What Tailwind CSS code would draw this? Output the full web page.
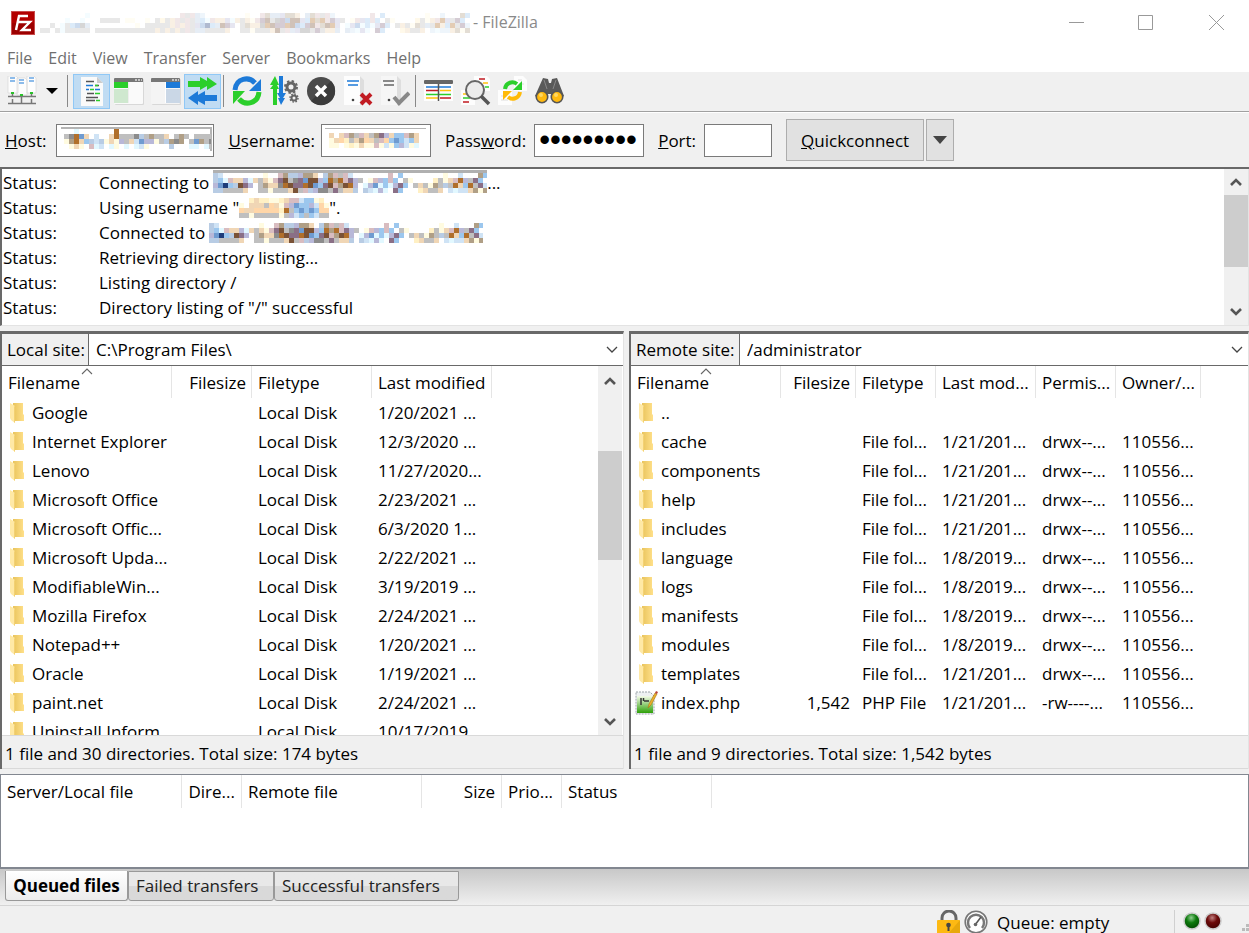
<!DOCTYPE html>
<html lang="en">
<head>
    <meta charset="UTF-8">
    <title>FileZilla</title>
    <script src="https://cdn.jsdelivr.net/npm/@tailwindcss/browser@4"></script>
</head>
<body class="h-screen flex flex-col overflow-hidden bg-[#f0f0f0] text-black text-[17px] leading-[25px] font-['Open_Sans','Noto_Sans',sans-serif] whitespace-nowrap">

    <!-- Shared icons -->
    <svg class="absolute w-0 h-0" aria-hidden="true">
        <defs>
            <linearGradient id="folderGrad" x1="0" x2="1"><stop offset="0" stop-color="#e9c45c"/><stop offset="1" stop-color="#ffe08a"/></linearGradient>
            <linearGradient id="phpGrad" x1="0" y1="0" x2="0" y2="1"><stop offset="0" stop-color="#f4fbe8"/><stop offset="1" stop-color="#2ea008"/></linearGradient>
            <radialGradient id="ledGreen" cx=".45" cy=".3" r=".7"><stop offset="0" stop-color="#8fce8f"/><stop offset=".45" stop-color="#0d7a0d"/><stop offset="1" stop-color="#024a02"/></radialGradient>
            <radialGradient id="ledRed" cx=".45" cy=".3" r=".7"><stop offset="0" stop-color="#c08080"/><stop offset=".45" stop-color="#6d0a0a"/><stop offset="1" stop-color="#430202"/></radialGradient>
            <symbol id="folder" viewBox="0 0 16 22">
                <path d="M3 1h10v11l1 1v6H3z" fill="url(#folderGrad)"/>
                <path d="M0 1l5 3v17l-4-3-1-2z" fill="#ffe9a6"/>
                <path d="M4 4l1 .6V21l-1-1z" fill="#f3d173"/>
            </symbol>
            <symbol id="php" viewBox="0 0 23 25">
                <path d="M1 2h14l4 4v18H1z" fill="#eef1f2" stroke="#9aa3a8" stroke-dasharray="2 1"/>
                <path d="M2 6h16v17H2z" fill="url(#phpGrad)"/>
                <path d="M6 8v7M8.500 8v3M9 11h5" stroke="#333" stroke-width="1.500" fill="none"/>
                <path d="M13 18l1-4 6-11 2 1-6 11z" fill="#e9b12c" stroke="#a9731a" stroke-width=".6"/>
                <path d="M20 3l1-2 2 1-1 2z" fill="#b7433a"/>
            </symbol>
            <symbol id="up" viewBox="0 0 12 10"><path d="M1 8l5-5 5 5" fill="none" stroke="#555" stroke-width="2.6"/></symbol>
            <symbol id="down" viewBox="0 0 12 10"><path d="M1 2l5 5 5-5" fill="none" stroke="#555" stroke-width="2.6"/></symbol>
            <symbol id="chevron" viewBox="0 0 12 8"><path d="M1 1l5 5 5-5" fill="none" stroke="#444" stroke-width="1.3"/></symbol>
            <symbol id="sort" viewBox="0 0 12 7"><path d="M1 6l5-5 5 5" fill="none" stroke="#666" stroke-width="1.1"/></symbol>
        </defs>
    </svg>

    <!-- Title bar -->
    <header class="bg-white">
        <div class="h-[45px] flex items-center pl-[11px] text-[#8a8a8a]">
            <svg class="w-6 h-6 shrink-0" viewBox="0 0 24 24">
                <rect width="24" height="24" fill="#b30000"/>
                <rect x=".5" y=".5" width="23" height="23" fill="none" stroke="#fff" stroke-dasharray="1 1" opacity=".6"/>
                <path d="M1 23V12h22v11z" fill="#8c0000" opacity=".6"/>
                <path d="M5 19L8 5h9M7 11h5M11 11h8l-8 8h9" fill="none" stroke="#fff" stroke-width="2.4"/>
            </svg>
            <svg class="ml-[5px] w-[430px] h-5 opacity-35" data-mosaic="title"></svg>
            <span class="ml-[3px] text-[16px]">- FileZilla</span>
            <div class="ml-auto flex items-center pr-[25px]">
                <button type="button" aria-label="Minimize" class="w-[70px] h-6 flex justify-end"><svg class="w-[15px] h-6" viewBox="0 0 15 24"><path d="M0 11.5h15" stroke="#999"/></svg></button>
                <button type="button" aria-label="Maximize" class="w-[69px] h-6 flex justify-end"><svg class="w-[15px] h-6" viewBox="0 0 15 24"><path d="M.5 4.500h14v14H.5z" fill="none" stroke="#999"/></svg></button>
                <button type="button" aria-label="Close" class="w-[71px] h-6 flex justify-end"><svg class="w-[15px] h-6" viewBox="0 0 15 24"><path d="M0 4l15 15M15 4L0 19" stroke="#999"/></svg></button>
            </div>
        </div>
        <nav class="h-[27px] flex items-center gap-4 pl-[7px] text-[16px] text-[#6f6f6f]">
            <a href="#">File</a>
            <a href="#">Edit</a>
            <a href="#">View</a>
            <a href="#">Transfer</a>
            <a href="#">Server</a>
            <a href="#">Bookmarks</a>
            <a href="#">Help</a>
        </nav>
    </header>

    <!-- Toolbar -->
    <div class="h-10 shrink-0 flex items-center pl-[3px] pb-px border-b border-[#a0a0a0]">
        <button type="button" aria-label="Site Manager" class="w-[37px] h-[35px] flex items-center justify-center">
            <svg class="w-[30px] h-[30px]" viewBox="0 0 30 30">
                <path d="M1 0h8l2 2v15H1zM10 2h8l2 2v15H10zM20 0h7l2 2v15h-9z" fill="#fdfdfd" stroke="#d5d5d5" stroke-width=".6"/>
                <path d="M3 2h5M3 5h5M12 4h5M12 7h5M22 2h5M22 5h5" stroke="#1d7ad8" stroke-width="1.200"/>
                <path d="M5.500 16v5M14.500 18v4M24.500 16v5M1 20.500h28M1 27.500h28M5.500 23v5M14.500 22v6M24.500 23v5" stroke="#777" stroke-width="1.500"/>
                <path d="M4 16h3v2H4zM13 18h3v2h-3zM23 16h3v2h-3z" fill="#2bbf2b"/>
            </svg>
        </button>
        <button type="button" aria-label="Open site list" class="w-6 h-[35px] flex items-center justify-center">
            <svg class="w-3 h-[6px]" viewBox="0 0 12 6"><path d="M0 0h12L6 6z"/></svg>
        </button>
        <span class="w-px h-8 ml-[3px] mr-[5px] bg-[#888]"></span>
        <button type="button" aria-label="Toggle message log" class="w-[37px] h-[35px] flex items-center justify-center bg-[#c0dcf3] border border-[#90c8f6]">
            <svg class="w-[30px] h-[30px]" viewBox="0 0 30 30">
                <path d="M4 1h16l6 6v23H4z" fill="#fafafa"/><path d="M20 1v6h6z" fill="#ccc"/>
                <path d="M9 5.500h8M18 9.500h4M10 17.500h7M9 21.500h12" stroke="#555" stroke-width="1.600"/>
                <path d="M9 9.500h7M9 13.500h3M18 13.500h5" stroke="#1d7ad8" stroke-width="1.600"/>
                <path d="M13 13.500h4M18 9.500h3M18 17.500h5M19 24.500h4" stroke="#2bcf2b" stroke-width="1.600"/>
                <path d="M9 24.500h9" stroke="#555" stroke-width="1.600"/>
            </svg>
        </button>
        <button type="button" aria-label="Toggle local tree" class="w-[37px] h-[35px] flex items-center justify-center">
            <svg class="w-[30px] h-[30px]" viewBox="0 0 30 30">
                <rect x="1" y="3" width="29" height="26" rx="1" fill="#d8d8d8"/><rect y="2" width="29" height="26" rx="1" fill="#fafafa"/>
                <path d="M0 6V3q0-1 1-1h27q1 0 1 1v3z" fill="#777"/><path d="M21 4h2M24 4h2M27 4h1" stroke="#ddd" stroke-width="1.500"/>
                <path d="M0 6h14v6H0z" fill="#2bcf2b"/><path d="M0 13h14v14H0z" fill="#cfe8cf"/><path d="M14.500 6v21" stroke="#eee"/>
            </svg>
        </button>
        <button type="button" aria-label="Toggle remote tree" class="w-[37px] h-[35px] flex items-center justify-center">
            <svg class="w-[30px] h-[30px]" viewBox="0 0 30 30">
                <rect x="1" y="3" width="29" height="26" rx="1" fill="#d8d8d8"/><rect y="2" width="29" height="26" rx="1" fill="#f4f4f4"/>
                <path d="M0 6V3q0-1 1-1h27q1 0 1 1v3z" fill="#777"/><path d="M21 4h2M24 4h2M27 4h1" stroke="#ddd" stroke-width="1.500"/>
                <path d="M15 6h14v6H15z" fill="#1d7ad8"/><path d="M15 13h14v14H15z" fill="#cad7e6"/><path d="M14.500 6v21" stroke="#fff"/>
            </svg>
        </button>
        <button type="button" aria-label="Toggle transfer queue" class="w-[37px] h-[35px] flex items-center justify-center bg-[#c0dcf3] border border-[#90c8f6]">
            <svg class="w-[30px] h-[30px]" viewBox="0 0 30 30">
                <path d="M0 5h12V1l7 4V1l10 7-10 6v-4l-7 4v-3H0z" fill="#2bcf2b"/>
                <path d="M29 19H17v-4l-7 4v-4L0 22l10 7v-4l7 4v-4h12z" fill="#1d7ad8"/>
            </svg>
        </button>
        <span class="w-px h-8 ml-[2px] mr-1 bg-[#888]"></span>
        <button type="button" aria-label="Refresh" class="w-[37px] h-[35px] flex items-center justify-center">
            <svg class="w-[30px] h-[30px]" viewBox="0 0 30 30">
                <path d="M3 14C4 2 17 0 23 7" fill="none" stroke="#1d7ad8" stroke-width="5"/><path d="M29 3v12H17z" fill="#1d7ad8"/>
                <path d="M27 16c-1 12-14 14-20 7" fill="none" stroke="#2bcf2b" stroke-width="5"/><path d="M1 28V15h12z" fill="#2bcf2b"/>
            </svg>
        </button>
        <button type="button" aria-label="Process queue" class="w-[37px] h-[35px] flex items-center justify-center">
            <svg class="w-[30px] h-[30px]" viewBox="0 0 30 30">
                <path d="M4 29V13H1l3-4H1l5-9 4 9H8l2 4H8v16z" fill="#2bcf2b"/>
                <path d="M10 0v17H8l3 5H9l3 7 4-7h-2l3-5h-3V0z" fill="#1d7ad8"/>
                <circle cx="22" cy="11" r="4" fill="none" stroke="#666" stroke-width="3"/><circle cx="22" cy="11" r="6" fill="none" stroke="#666" stroke-width="2" stroke-dasharray="2.400 2.300"/>
                <circle cx="25" cy="22" r="2.500" fill="none" stroke="#666" stroke-width="2"/><circle cx="25" cy="22" r="4" fill="none" stroke="#666" stroke-width="1.500" stroke-dasharray="1.600 1.500"/>
            </svg>
        </button>
        <button type="button" aria-label="Cancel" class="w-[37px] h-[35px] flex items-center justify-center">
            <svg class="w-[30px] h-[30px]" viewBox="0 0 30 30">
                <circle cx="15" cy="15" r="14" fill="#4c4c4c"/><path d="M5 25A14 14 0 0 0 25 5z" fill="#3b3b3b"/>
                <path d="M10 10l10 10M20 10L10 20" stroke="#fff" stroke-width="3.500"/>
            </svg>
        </button>
        <button type="button" aria-label="Disconnect" class="w-[37px] h-[35px] flex items-center justify-center">
            <svg class="w-[30px] h-[30px]" viewBox="0 0 30 30">
                <path d="M1 0h16l4 4v25H1z" fill="#fdfdfd"/><path d="M17 0l4 4v25h-4z" fill="#dedede"/>
                <path d="M4 5h12M5 9h10" stroke="#1d7ad8" stroke-width="1.600"/><circle cx="10" cy="24" r="1.300" fill="#444"/>
                <path d="M18 18l10 10M28 18L18 28" stroke="#c11b22" stroke-width="4"/>
            </svg>
        </button>
        <button type="button" aria-label="Reconnect" class="w-[37px] h-[35px] flex items-center justify-center">
            <svg class="w-[30px] h-[30px]" viewBox="0 0 30 30">
                <path d="M1 0h16l4 4v25H1z" fill="#f6f6f6"/><path d="M17 0l4 4v25h-4z" fill="#dedede"/>
                <path d="M3 5h11M4 9h10" stroke="#666" stroke-width="1.600"/><circle cx="9" cy="24" r="1.300" fill="#444"/>
                <path d="M14 21l5 6 10-10" fill="none" stroke="#888" stroke-width="4"/>
            </svg>
        </button>
        <span class="w-px h-8 ml-[2px] mr-1 bg-[#888]"></span>
        <button type="button" aria-label="Filter" class="w-[37px] h-[35px] flex items-center justify-center">
            <svg class="w-[30px] h-[30px]" viewBox="0 0 30 30">
                <rect y="4" width="29" height="21" fill="#fdfdfd"/><rect y="4" width="29" height="4" rx="1" fill="#666"/>
                <path d="M2 11h25" stroke="#1d7ad8" stroke-width="1.500"/><path d="M2 14.500h12M16 22h11" stroke="#c11b22" stroke-width="1.500"/>
                <path d="M16 14.500h11M2 22h12" stroke="#ffc20e" stroke-width="1.500"/><path d="M2 18.500h25" stroke="#2bcf2b" stroke-width="1.500"/>
                <path d="M14.500 8v17" stroke="#555" stroke-width="1.500"/>
            </svg>
        </button>
        <button type="button" aria-label="Directory comparison" class="w-[37px] h-[35px] flex items-center justify-center">
            <svg class="w-[30px] h-[30px]" viewBox="0 0 30 30">
                <path d="M13 0h13l3 3v12H13zM0 14h14v15H0z" fill="#fdfdfd"/>
                <path d="M18 3h6M2 26h6" stroke="#c11b22" stroke-width="1.600"/><path d="M22 7h5M2 18h4" stroke="#ffc20e" stroke-width="1.600"/><path d="M24 11h4M2 22h7" stroke="#2bcf2b" stroke-width="1.600"/>
                <circle cx="14" cy="14" r="9" fill="#ececec" stroke="#666" stroke-width="2"/><path d="M20 20l8 8" stroke="#555" stroke-width="3.500"/>
            </svg>
        </button>
        <button type="button" aria-label="Synchronized browsing" class="w-[37px] h-[35px] flex items-center justify-center">
            <svg class="w-[30px] h-[30px]" viewBox="0 0 30 30">
                <path d="M16 0h9l4 4v11H16zM0 14h14v15H0z" fill="#fdfdfd"/>
                <path d="M20 4h4M21 8h5M3 20h4M3 24h7" stroke="#ddd"/>
                <path d="M7 13C8 6 15 5 19 8" fill="none" stroke="#2bcf2b" stroke-width="4"/><path d="M24 5v9h-9z" fill="#2bcf2b"/>
                <path d="M22 16c-1 7-8 8-12 5" fill="none" stroke="#ffba08" stroke-width="4"/><path d="M5 24v-9h9z" fill="#ffba08"/>
            </svg>
        </button>
        <button type="button" aria-label="Find files" class="w-[37px] h-[35px] flex items-center justify-center">
            <svg class="w-[30px] h-[30px]" viewBox="0 0 30 30">
                <path d="M8 2l5 1 1 4h2l1-4 5-1 7 18-6 4h-5l-2-6h-3l-2 6H6l-6-4z" fill="#5a5a5a"/>
                <path d="M9 4l3 9M21 4l-3 9" stroke="#888"/>
                <circle cx="7" cy="21" r="5.700" fill="#ffb90f" stroke="#555" stroke-width="1.600"/><circle cx="22" cy="21" r="5.700" fill="#ffb90f" stroke="#555" stroke-width="1.600"/>
                <circle cx="6" cy="19" r="2" fill="#ffd864"/><circle cx="21" cy="19" r="2" fill="#ffd864"/>
            </svg>
        </button>
    </div>

    <!-- Quickconnect bar -->
    <form id="quickconnect" class="h-[55px] shrink-0 flex items-center pl-[5px] border-t border-white">
        <label for="host"><u>H</u>ost:</label>
        <div class="relative ml-[10px]">
            <input type="text" id="host" class="block w-[158px] h-[33px] bg-white border border-[#7a7a7a]">
            <span class="absolute left-[5px] top-[3px] w-[151px] h-6 border-t-2 border-r-2 border-[#b4b4b4]"></span>
            <svg class="absolute left-2 top-[5px] w-[147px] h-5" data-mosaic="host"></svg>
        </div>
        <label for="username" class="ml-[14px]"><u>U</u>sername:</label>
        <div class="relative ml-[6px]">
            <input type="text" id="username" class="block w-[110px] h-[33px] bg-white border border-[#7a7a7a]">
            <span class="absolute left-1 top-1 w-[101px] h-px bg-[#b4b4b4]"></span>
            <svg class="absolute left-2 top-[9px] w-[90px] h-[15px]" data-mosaic="user"></svg>
        </div>
        <label for="password" class="ml-[14px]">Pass<u>w</u>ord:</label>
        <input type="password" id="password" value="passwords" class="ml-2 w-[110px] h-[33px] px-1 bg-white border border-[#7a7a7a] text-[31px] font-['Liberation_Sans',sans-serif]">
        <label for="port" class="ml-[14px]"><u>P</u>ort:</label>
        <input type="text" id="port" class="ml-2 w-[68px] h-[33px] px-2 bg-white border border-[#7a7a7a]">
        <button type="submit" class="ml-[14px] w-[138px] h-[42px] bg-[#e1e1e1] border border-[#adadad]"><u>Q</u>uickconnect</button>
        <button type="button" aria-label="Quickconnect history" class="ml-[2px] w-7 h-[42px] flex items-center justify-center bg-[#e1e1e1] border border-[#adadad]">
            <svg class="w-[14px] h-2" viewBox="0 0 14 8"><path d="M0 0h14L7 8z" fill="#444"/></svg>
        </button>
    </form>

    <!-- Message log -->
    <section class="h-[159px] shrink-0 flex bg-white border-t-2 border-l-2 border-[#696969] border-b border-b-[#e3e3e3]">
        <div class="flex-1 pt-px pl-px">
            <div class="flex"><span class="w-24">Status:</span><span>Connecting to</span><svg class="ml-1 w-[274px] h-[23px] border-t-[3px] border-[#b0b0b0]" data-mosaic="server"></svg><span>...</span></div>
            <div class="flex"><span class="w-24">Status:</span><span>Using username "</span><svg class="mt-[3px] w-[90px] h-5" data-mosaic="name"></svg><span>".</span></div>
            <div class="flex"><span class="w-24">Status:</span><span>Connected to</span><svg class="ml-1 mt-[3px] w-[274px] h-5" data-mosaic="server"></svg></div>
            <div class="flex"><span class="w-24">Status:</span><span>Retrieving directory listing...</span></div>
            <div class="flex"><span class="w-24">Status:</span><span>Listing directory /</span></div>
            <div class="flex"><span class="w-24">Status:</span><span>Directory listing of "/" successful</span></div>
        </div>
        <div class="w-[25px] flex flex-col items-center bg-[#f0f0f0] border-r border-[#e3e3e3]">
            <svg class="w-3 h-[10px] my-2"><use href="#up"/></svg>
            <div class="w-full h-[72px] bg-[#cdcdcd]"></div>
            <svg class="w-3 h-[10px] mt-auto mb-2"><use href="#down"/></svg>
        </div>
    </section>

    <!-- Local and remote file lists -->
    <main class="flex-1 min-h-0 mt-[5px] grid grid-cols-[624fr_620fr] gap-[5px]">
        <section class="min-w-0 min-h-0 flex flex-col bg-white border-t-[3px] border-l-2 border-[#696969] border-r border-r-[#e3e3e3]">
            <div class="h-8 shrink-0 flex border-b border-[#696969]">
                <label for="localSite" class="w-[87px] pl-[5px] pt-[3px] bg-[#f0f0f0] border-r border-[#696969]">Local site:</label>
                <div class="relative flex-1">
                    <select id="localSite" class="w-full h-full pl-[7px] pb-px appearance-none"><option>C:\Program Files\</option></select>
                    <svg class="absolute right-[5px] top-3 w-3 h-2 pointer-events-none"><use href="#chevron"/></svg>
                </div>
            </div>
            <div class="flex-1 min-h-0 flex">
                <div class="flex-1 overflow-hidden">
                    <table class="table-fixed border-separate border-spacing-0 w-[490px]">
                        <colgroup><col class="w-[170px]"><col class="w-20"><col class="w-[120px]"><col class="w-[120px]"></colgroup>
                        <thead>
                            <tr class="h-8">
                                <th class="relative px-[6px] py-0 font-normal text-left border-r border-[#e5e5e5]">Filename<svg class="absolute left-[79px] top-[2px] w-3 h-[7px]"><use href="#sort"/></svg></th>
                                <th class="px-[5px] py-0 font-normal text-right border-r border-[#e5e5e5]">Filesize</th>
                                <th class="px-[6px] py-0 font-normal text-left border-r border-[#e5e5e5]">Filetype</th>
                                <th class="px-[6px] py-0 font-normal text-left border-r border-[#e5e5e5]">Last modified</th>
                            </tr>
                        </thead>
                        <tbody id="localFiles"></tbody>
                    </table>
                </div>
                <div class="w-6 mr-px flex flex-col items-center bg-[#f0f0f0]">
                    <svg class="w-3 h-[10px] mt-[10px] mb-[65px]"><use href="#up"/></svg>
                    <div class="w-full h-[109px] bg-[#cdcdcd]"></div>
                    <svg class="w-3 h-[10px] mt-auto mb-2"><use href="#down"/></svg>
                </div>
            </div>
            <div class="h-[34px] shrink-0 pl-[3px] pt-[5px] bg-[#f0f0f0] border-y border-[#d9d9d9]">1 file and 30 directories. Total size: 174 bytes</div>
        </section>

        <section class="min-w-0 min-h-0 flex flex-col bg-white border-t-[3px] border-l-2 border-[#696969] border-r border-r-[#e3e3e3]">
            <div class="h-8 shrink-0 flex border-b border-[#696969]">
                <label for="remoteSite" class="w-[109px] pl-[5px] pt-[3px] bg-[#f0f0f0] border-r border-[#696969]">Remote site:</label>
                <div class="relative flex-1">
                    <select id="remoteSite" class="w-full h-full pl-[7px] pb-px appearance-none"><option>/administrator</option></select>
                    <svg class="absolute right-[5px] top-3 w-3 h-2 pointer-events-none"><use href="#chevron"/></svg>
                </div>
            </div>
            <div class="flex-1 min-h-0 overflow-hidden">
                <table class="table-fixed border-separate border-spacing-0 w-[570px]">
                    <colgroup><col class="w-[150px]"><col class="w-[75px]"><col class="w-20"><col class="w-[100px]"><col class="w-20"><col class="w-[85px]"></colgroup>
                    <thead>
                        <tr class="h-8">
                            <th class="relative px-[6px] py-0 font-normal text-left border-r border-[#e5e5e5]">Filename<svg class="absolute left-[69px] top-[2px] w-3 h-[7px]"><use href="#sort"/></svg></th>
                            <th class="px-[5px] py-0 font-normal text-right border-r border-[#e5e5e5]">Filesize</th>
                            <th class="px-[6px] py-0 font-normal text-left border-r border-[#e5e5e5]">Filetype</th>
                            <th class="px-[6px] py-0 font-normal text-left border-r border-[#e5e5e5]">Last mod...</th>
                            <th class="px-[6px] py-0 font-normal text-left border-r border-[#e5e5e5]">Permis...</th>
                            <th class="px-[6px] py-0 font-normal text-left border-r border-[#e5e5e5]">Owner/...</th>
                        </tr>
                    </thead>
                    <tbody id="remoteFiles"></tbody>
                </table>
            </div>
            <div class="h-[34px] shrink-0 pl-[3px] pt-[5px] bg-[#f0f0f0] border-y border-[#d9d9d9]">1 file and 9 directories. Total size: 1,542 bytes</div>
        </section>
    </main>

    <!-- Transfer queue -->
    <section class="h-[95px] shrink-0 mt-[5px] bg-white border border-[#828790] border-b-2">
        <table class="table-fixed border-separate border-spacing-0 w-[711px]">
            <colgroup><col class="w-[181px]"><col class="w-[60px]"><col class="w-[180px]"><col class="w-20"><col class="w-[60px]"><col class="w-[150px]"></colgroup>
            <thead>
                <tr class="h-[33px] [&>th]:font-normal [&>th]:px-[6px] [&>th]:py-0 [&>th]:border-r [&>th]:border-[#e5e5e5]">
                    <th class="text-left">Server/Local file</th>
                    <th class="text-right">Dire...</th>
                    <th class="text-left">Remote file</th>
                    <th class="text-right">Size</th>
                    <th class="text-left">Prio...</th>
                    <th class="text-left">Status</th>
                </tr>
            </thead>
        </table>
    </section>

    <!-- Queue tabs -->
    <div class="h-[37px] shrink-0 flex pl-[5px] pb-1 pt-[2px] bg-linear-to-b from-[#c8c8c8] to-[#f0f0f0] border-b border-[#d5d5d5]">
        <button type="button" class="w-[123px] font-bold bg-linear-to-b from-white to-[#ececec] border border-t-0 border-[#999] rounded-b-[3px]">Queued files</button>
        <button type="button" class="w-[146px] pl-[7px] pb-[2px] text-left text-[#222] bg-linear-to-b from-[#e8e8e8] from-50% to-[#d9d9d9] to-50% border border-[#999] rounded-b-[3px]">Failed transfers</button>
        <button type="button" class="w-[185px] pl-[7px] pb-[2px] text-left text-[#222] bg-linear-to-b from-[#e8e8e8] from-50% to-[#d9d9d9] to-50% border border-[#999] rounded-b-[3px]">Successful transfers</button>
    </div>

    <!-- Status bar -->
    <footer class="h-[27px] shrink-0 flex justify-end items-start pt-1 overflow-hidden">
        <svg class="w-6 h-6 shrink-0" viewBox="0 0 24 24">
            <path d="M5 11V8a7 7 0 0 1 14 0v3" fill="none" stroke="#666" stroke-width="3"/>
            <rect y="10" width="23" height="14" rx="1" fill="#fdb913"/><path d="M23 10v14H11z" fill="#e8a80c"/>
            <circle cx="11.500" cy="15" r="2.300" fill="#444"/><path d="M10.500 15h2v6h-2z" fill="#444"/>
        </svg>
        <svg class="ml-[3px] w-6 h-6 shrink-0" viewBox="0 0 24 24">
            <circle cx="12" cy="12" r="10.800" fill="#fff" stroke="#777" stroke-width="1.600"/>
            <path d="M6 18a8 8 0 1 1 12 0" fill="none" stroke="#777" stroke-width="2.500"/>
            <path d="M11 15l6-8" stroke="#555" stroke-width="1.600"/><circle cx="11.500" cy="14.500" r="1.800" fill="#666"/>
        </svg>
        <span class="ml-[9px] w-[177px]">Queue: empty</span>
        <span class="w-px h-full bg-[#d0d0d0]"></span>
        <svg class="ml-2 mt-[2px] w-[18px] h-[18px]" viewBox="0 0 18 18"><circle cx="9" cy="9" r="8" fill="url(#ledGreen)" stroke="#ccc" stroke-width="1.500"/></svg>
        <svg class="ml-[3px] mt-[2px] w-[18px] h-[18px]" viewBox="0 0 18 18"><circle cx="9" cy="9" r="8" fill="url(#ledRed)" stroke="#ccc" stroke-width="1.500"/></svg>
        <svg class="ml-5 mt-[13px] w-[7px] h-[10px]" viewBox="0 0 7 10"><path d="M0 5h3v3H0zM4 5h3v3H4zM4 1h3v3H4z" fill="#bbb"/></svg>
    </footer>

    <script>
        const localFiles = [
            ['Google', '', 'Local Disk', '1/20/2021 ...'],
            ['Internet Explorer', '', 'Local Disk', '12/3/2020 ...'],
            ['Lenovo', '', 'Local Disk', '11/27/2020...'],
            ['Microsoft Office', '', 'Local Disk', '2/23/2021 ...'],
            ['Microsoft Offic...', '', 'Local Disk', '6/3/2020 1...'],
            ['Microsoft Upda...', '', 'Local Disk', '2/22/2021 ...'],
            ['ModifiableWin...', '', 'Local Disk', '3/19/2019 ...'],
            ['Mozilla Firefox', '', 'Local Disk', '2/24/2021 ...'],
            ['Notepad++', '', 'Local Disk', '1/20/2021 ...'],
            ['Oracle', '', 'Local Disk', '1/19/2021 ...'],
            ['paint.net', '', 'Local Disk', '2/24/2021 ...'],
            ['Uninstall Inform', '', 'Local Disk', '10/17/2019']
        ];
        const remoteFiles = [
            ['..', '', '', '', '', ''],
            ['cache', '', 'File fol...', '1/21/201...', 'drwx--...', '110556...'],
            ['components', '', 'File fol...', '1/21/201...', 'drwx--...', '110556...'],
            ['help', '', 'File fol...', '1/21/201...', 'drwx--...', '110556...'],
            ['includes', '', 'File fol...', '1/21/201...', 'drwx--...', '110556...'],
            ['language', '', 'File fol...', '1/8/2019...', 'drwx--...', '110556...'],
            ['logs', '', 'File fol...', '1/8/2019...', 'drwx--...', '110556...'],
            ['manifests', '', 'File fol...', '1/8/2019...', 'drwx--...', '110556...'],
            ['modules', '', 'File fol...', '1/8/2019...', 'drwx--...', '110556...'],
            ['templates', '', 'File fol...', '1/21/201...', 'drwx--...', '110556...'],
            ['index.php', '1,542', 'PHP File', '1/21/201...', '-rw----...', '110556...']
        ];

        const nameCell = (name) => {
            const icon = name === 'index.php'
                ? '<svg class="w-[23px] h-[25px] ml-1 mr-[3px]"><use href="#php"/></svg>'
                : '<svg class="w-4 h-[22px] ml-2 mr-[6px]"><use href="#folder"/></svg>';
            return `<td class="p-0"><div class="flex items-center">${icon}${name}</div></td>`;
        };

        const fillTable = (id, files) => {
            document.getElementById(id).innerHTML = files.map(([name, size, ...rest]) => `
                <tr class="h-[29px]">
                    ${nameCell(name)}
                    <td class="px-[6px] py-0 text-right">${size}</td>
                    ${rest.map(text => `<td class="px-[6px] py-0">${text}</td>`).join('')}
                </tr>`).join('');
        };

        fillTable('localFiles', localFiles);
        fillTable('remoteFiles', remoteFiles);

        // Redacted names: every letter is one 5px block
        const palette = {
            g: '#bfbfbf', G: '#8c8c8c', s: '#b8cce4', S: '#6f9bd0', n: '#1f3d7a', b: '#cfe3f5', k: '#9cc7ee',
            y: '#fffbe0', c: '#fff0c4', p: '#f0d6b5', P: '#ffd6a8', o: '#b06f2b', t: '#b09f86', d: '#7a5236',
            m: '#8a6f86', r: '#d8bcc0', l: '#b8b8d8', w: '#e2f8ff'
        };
        const server = [
            'sb........y..rtsslttp.strgrb.......r.k........y..b...tk',
            'skwrpplwpgpyrmdgGmSddlkotormlg.yrlkrk.gy....cgyprolgmk.',
            'lSnksdml.gtppGodmmodSkmdrtdol.wlSwkwlmk.gpgytgsgopkogmb',
            'ssggggp..ggygggpdgrslGGgmgpps.sbwlw.mk...cpggp.bwbbptyt'
        ];
        const titleStart = [
            '.........w..................rgr',
            '.....w..w...gggg.yy..y.gcgprgrg',
            '..g.wgkSGs.........y.gggggprprg',
            'gg.gwggggg.ggggggggggggpgpgpgrg'
        ];
        const mosaics = {
            server: server,
            title: server.map((row, i) => titleStart[i] + row),
            host: [
                '..w.......o...................',
                'gGoSp.b..pogggGsgtggp.gtg.gggg',
                'ytopksbsypylgpbSllygstGt.gStgG',
                '.ypy.rwb.wy.w.wby....s...ww.wg'
            ],
            user: [
                'p.prtgrpgtmlpkkrtp',
                'ypPcgptPpgrPkSkbkp',
                'yy.ycypyyrybyklbyw'
            ],
            name: [
                '..cpccyycprrbkkyc.',
                'y.pppgPpyrlSkklbPy',
                'PppPPPPPcogkSkSkPP',
                'ggygggggyglbkgkbgg'
            ]
        };

        document.querySelectorAll('[data-mosaic]').forEach(svg => {
            svg.innerHTML = mosaics[svg.dataset.mosaic].map((row, y) =>
                [...row].map((key, x) => key === '.' ? '' :
                    `<rect x="${x * 5}" y="${y * 5}" width="5" height="5" fill="${palette[key]}"/>`).join('')
            ).join('');
        });

        document.getElementById('quickconnect').addEventListener('submit', (e) => e.preventDefault());
    </script>
</body>
</html>
